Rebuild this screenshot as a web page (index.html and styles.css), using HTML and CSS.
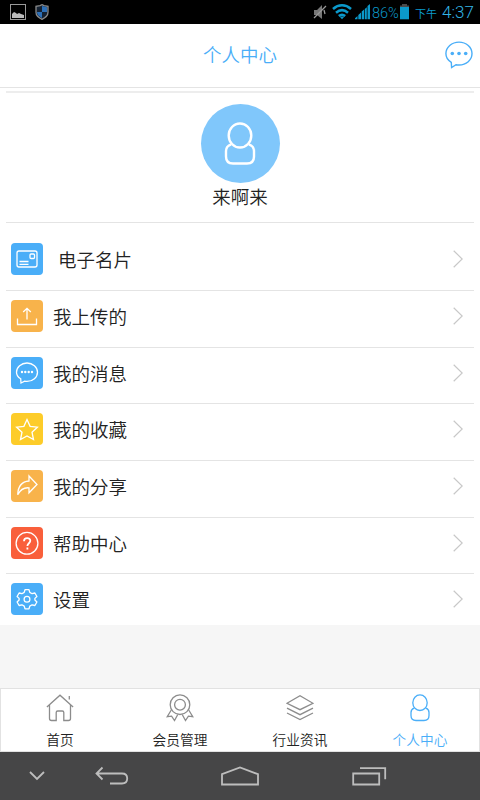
FILE: index.html
```html
<!DOCTYPE html>
<html lang="zh-CN">
<head>
  <meta charset="UTF-8" />
  <meta name="viewport" content="width=device-width, initial-scale=1" />
  <title>个人中心</title>
  <link rel="stylesheet" href="styles.css">
</head>
<body>

  <!-- Status bar -->
  <div class="status">
    <svg class="s-photo" width="16" height="16" viewBox="0 0 16 16"><rect x=".5" y=".5" width="15" height="15" fill="none" stroke="#999"/><path d="M2 14v-4l2-2 2 1 1 1 2-1 2 1 3 1v3z" fill="#bbb"/></svg>
    <svg class="s-shield" width="14" height="16" viewBox="0 0 14 16"><path d="M7 .7l2 1 4 .6v6c0 3-2.500 5.500-6 7-3.500-1.500-6-4-6-7v-6l4-.6z" fill="#152232" stroke="#8a8a8a" stroke-width="1.300"/><path d="M7 2l5 1.200V8H7zM2 8h5v6C4 12.500 2 11 2 8z" fill="#2d70b8"/></svg>
    <span class="spacer"></span>
    <svg class="s-mute" width="14" height="16" viewBox="0 0 14 16"><path d="M1 6h3l5-5v14l-5-4H1z" fill="#777"/><path d="M13 2L1 14M11 6l1 4" stroke="#999" stroke-width="1.300" fill="none"/></svg>
    <svg class="s-wifi" width="20" height="16" viewBox="0 0 20 16" fill="none" stroke="#0b99cb" stroke-width="2.500"><path d="M1 5c5.500-5 12.500-5 18 0M4 8.700c3.700-3.200 8.300-3.200 12 0M6.800 12c2-1.600 4.400-1.600 6.400 0"/><path d="M7.500 12.500L10 15.300l2.500-2.800z" fill="#0b99cb" stroke="none"/></svg>
    <svg class="s-signal" width="15" height="16" viewBox="0 0 15 16"><path d="M0 15.300v-1L2.500 12v3.300zM3.300 15.300V11L6 8.600v6.700zM6.700 15.300V7.600l2.400-2v9.700zM9.800 15.300V5l2-1.800v12.100zM12.500 15.300V2L15 0v15.300z" fill="#0b99cb"/></svg>
    <span class="s-percent">86%</span>
    <svg class="s-battery" width="9" height="16" viewBox="0 0 9 16"><path d="M0 3V1.500h2V0h5v1.500h2V3z" fill="#4a4a4a"/><rect y="3" width="9" height="12.300" fill="#0b99cb"/></svg>
    <span class="s-ampm">下午</span>
    <span class="s-time">4:37</span>
  </div>

  <!-- Title bar -->
  <div class="header">
    <h1>个人中心</h1>
    <svg class="chat" width="28" height="28" viewBox="0 0 28 28" fill="none" stroke="#4aaef8" stroke-width="1.400"><path d="M6.300 21.400C3 19.500.9 16.300.9 12.600.9 6.200 6.700 1.100 14 1.100s13 5.100 13 11.500S21.300 24 14 24c-1 0-2-.1-3-.3L6.600 26.600z"/><g fill="#4aaef8" stroke="none"><circle cx="7.300" cy="12.500" r="1.800"/><circle cx="14" cy="12.500" r="1.800"/><circle cx="20.700" cy="12.500" r="1.800"/></g></svg>
  </div>

  <div class="content">
    <div class="profile">
      <div class="avatar">
        <svg width="32" height="44" viewBox="0 0 32 44" fill="none" stroke="#fff" stroke-width="2.400"><ellipse cx="16" cy="13.500" rx="11.300" ry="12"/><path d="M7.200 22.300C3.500 23.500 2 26 2 29v5.500c0 4.500 2.500 7 7 7h14c4.500 0 7-2.500 7-7V29c0-3-1.500-5.500-5.200-6.700"/></svg>
      </div>
      <div class="name">来啊来</div>
    </div>

    <div class="menu">
      <div class="item first">
        <span class="icon blue"><svg viewBox="0 0 32 32"><rect x="6" y="8" width="20" height="16" rx="2"/><rect x="19" y="11" width="4.500" height="4.500" rx="1"/><path d="M8.500 18.500h9M8.500 21.300h9"/></svg></span>
        <span class="label">电子名片</span>
        <svg class="arrow" viewBox="0 0 10 18"><path d="M.7.700L9.200 9 .7 17.300"/></svg>
      </div>
      <div class="item">
        <span class="icon orange"><svg viewBox="0 0 32 32"><path d="M6.500 18.500v6h19v-6M16 19.500V8.500M12.200 12L16 8.300l3.800 3.700"/></svg></span>
        <span class="label">我上传的</span>
        <svg class="arrow" viewBox="0 0 10 18"><path d="M.7.700L9.200 9 .7 17.300"/></svg>
      </div>
      <div class="item">
        <span class="icon blue"><svg viewBox="0 0 32 32"><path d="M9.700 21.700C7 20.200 5.500 17.900 5.500 15.200c0-5.100 4.700-9.200 10.500-9.200s10.500 4.100 10.500 9.200-4.700 9.200-10.500 9.200c-.8 0-1.600-.1-2.400-.2L10 26z"/><g class="solid"><circle cx="11" cy="15" r="1.200"/><circle cx="14.300" cy="15" r="1.200"/><circle cx="17.700" cy="15" r="1.200"/><circle cx="21" cy="15" r="1.200"/></g></svg></span>
        <span class="label">我的消息</span>
        <svg class="arrow" viewBox="0 0 10 18"><path d="M.7.700L9.200 9 .7 17.300"/></svg>
      </div>
      <div class="item">
        <span class="icon yellow"><svg viewBox="0 0 32 32"><path d="M16 6.500l3.100 6.800 7.300.9-5.400 5 1.500 7.300-6.500-3.600-6.500 3.600 1.500-7.300-5.400-5 7.300-.9z"/></svg></span>
        <span class="label">我的收藏</span>
        <svg class="arrow" viewBox="0 0 10 18"><path d="M.7.700L9.200 9 .7 17.300"/></svg>
      </div>
      <div class="item">
        <span class="icon orange"><svg viewBox="0 0 32 32"><path d="M18 6l8 8.500-8 8.300v-5c-5-.5-8.500 1.500-11.300 7C7 16.500 10.500 11.500 18 11z"/></svg></span>
        <span class="label">我的分享</span>
        <svg class="arrow" viewBox="0 0 10 18"><path d="M.7.700L9.200 9 .7 17.300"/></svg>
      </div>
      <div class="item">
        <span class="icon red"><svg viewBox="0 0 32 32"><circle cx="16" cy="16.300" r="10.900"/><path stroke-width="1.800" d="M13 14.200c0-4.200 6.300-4.100 6.300-.4 0 2.400-2.900 2.500-2.900 5.200M16.400 20.500v2"/></svg></span>
        <span class="label">帮助中心</span>
        <svg class="arrow" viewBox="0 0 10 18"><path d="M.7.700L9.200 9 .7 17.300"/></svg>
      </div>
      <div class="item last">
        <span class="icon blue"><svg viewBox="0 0 32 32"><path stroke-linejoin="round" d="M14 6.700h4l.8 2.700 2.300 1.300 2.800-.7 2 3.500-2 1.900v1.600l2 2-2 3.500-2.800-.7-2.300 1.300-.8 2.700h-4l-.8-2.700-2.300-1.300-2.800.7-2-3.500 2-2v-1.600l-2-1.900 2-3.500 2.800.7 2.300-1.300z"/><circle cx="16" cy="16.200" r="2.900"/></svg></span>
        <span class="label">设置</span>
        <svg class="arrow" viewBox="0 0 10 18"><path d="M.7.700L9.200 9 .7 17.300"/></svg>
      </div>
    </div>
  </div>

  <!-- Bottom tabs -->
  <div class="tabs">
    <div class="tab">
      <svg viewBox="0 0 28 28"><path d="M.9 13L14 1.200 27.100 13M3.500 11v13.500c0 1.300.7 2 2 2h4.700v-8c0-1 .5-1.500 1.500-1.500h4.600c1 0 1.500.5 1.500 1.500v8h4.700c1.300 0 2-.7 2-2V11M23.300 2v3.500"/></svg>
      <span>首页</span>
    </div>
    <div class="tab">
      <svg viewBox="0 0 28 28"><circle cx="14" cy="10.700" r="9.800"/><circle cx="14" cy="10.700" r="5.400"/><path d="M5.300 16L1.200 22.700l4.400-.5L8.500 26.500l3.300-6M22.700 16l4.100 6.700-4.400-.5-2.900 4.300-3.300-6"/></svg>
      <span>会员管理</span>
    </div>
    <div class="tab">
      <svg viewBox="0 0 28 28"><path d="M1 9.300l13-7.500 13 7.500-13 6.400zM1 14.200l13 6.500 13-6.500M1 19l13 6.600L27 19"/></svg>
      <span>行业资讯</span>
    </div>
    <div class="tab active">
      <svg viewBox="0 0 28 28"><ellipse cx="14" cy="8.700" rx="7.200" ry="7.800"/><path d="M8 14.200c-2 .8-3 2.300-3 4.300v3c0 3.300 1.700 5 5 5h8c3.300 0 5-1.700 5-5v-3c0-2-1-3.500-3-4.300"/></svg>
      <span>个人中心</span>
    </div>
  </div>

  <!-- System keys -->
  <div class="navkeys">
    <svg class="k-hide" width="16" height="10" viewBox="0 0 16 10"><path d="M1 1l7 7 7-7"/></svg>
    <svg class="k-back" width="34" height="20" viewBox="0 0 34 20"><path d="M7.500 1.500L1.500 7.500l6 6M2 7.500h25c3.500 0 5.200 2 5.200 5s-1.700 5-5.200 5H15"/></svg>
    <svg class="k-home" width="38" height="20" viewBox="0 0 38 20"><path d="M1 18.500V8.200L19 1.500l18 6.700v10.300z"/></svg>
    <svg class="k-recent" width="36" height="20" viewBox="0 0 36 20"><path d="M1.200 7.500h26v11h-26zM8 2.200h25.200v11"/></svg>
  </div>

</body>
</html>
```
FILE: styles.css
```css
* {
  box-sizing: border-box;
}

body {
  margin: 0;
  height: 800px;
  display: flex;
  flex-direction: column;
  overflow: hidden;
  background: #f6f6f6;
  color: #222;
  font-family: "Noto Sans CJK SC", sans-serif;
  font-weight: 350;
}

svg {
  display: block;
  flex: none;
}

/* status bar */
.status {
  height: 24px;
  flex: none;
  display: flex;
  align-items: center;
  padding: 0 6px 0 10px;
  background: #000;
  color: #0b99cb;
  font-family: Roboto, "Noto Sans CJK SC", sans-serif;
  font-weight: 300;
  white-space: nowrap;
}

.s-shield {
  margin-left: 9px;
}

.spacer {
  flex: 1;
}

.s-wifi {
  margin-left: 5px;
}

.s-signal {
  margin-left: 3px;
}

.s-percent {
  width: 28px;
  margin-left: 2px;
  font-size: 14.5px;
  line-height: 24px;
  padding-top: 3px;
}

.s-ampm {
  width: 22px;
  margin-left: 6px;
  font-size: 11px;
  font-weight: 400;
  padding-top: 2px;
}

.s-time {
  width: 32px;
  margin-left: 5px;
  font-size: 17px;
  color: #33b5e5;
}

/* title bar */
.header {
  height: 64px;
  flex: none;
  display: flex;
  align-items: center;
  justify-content: center;
  position: relative;
  padding-bottom: 3px;
  background: #fff;
  border-bottom: 1px solid #e4e4e4;
}

.header h1 {
  margin: 0;
  font-size: 18.5px;
  font-weight: 350;
  color: #4aaef8;
}

.chat {
  position: absolute;
  right: 7px;
  top: 17px;
}

/* content */
.content {
  height: 537px;
  flex: none;
  padding: 3px 6px 0;
  background: #fff;
}

.profile {
  height: 132px;
  display: flex;
  flex-direction: column;
  align-items: center;
  padding-top: 11px;
  border-top: 2px solid #ededed;
  border-bottom: 1px solid #e4e4e4;
}

.avatar {
  width: 79px;
  height: 79px;
  display: flex;
  align-items: center;
  justify-content: center;
  border-radius: 50%;
  background: #80c7fb;
}

.name {
  font-size: 18.5px;
  line-height: 26px;
}

.item {
  height: 56.7px;
  display: flex;
  align-items: center;
  padding: 0 11px 6px 5px;
  border-bottom: 1.5px solid #e4e4e4;
}

.item.first {
  height: 68px;
  padding-top: 10px;
}

.item.last {
  height: 51px;
  padding-bottom: 1px;
  border-bottom: none;
}

.icon {
  width: 32px;
  height: 32px;
  border-radius: 4px;
}

.icon svg {
  width: 32px;
  height: 32px;
  fill: none;
  stroke: #fff;
  stroke-width: 1.3;
}

.icon .solid {
  fill: #fff;
  stroke: none;
}

.blue {
  background: #4aaef8;
}

.orange {
  background: #f8b34b;
}

.yellow {
  background: #fdcc29;
}

.red {
  background: #f95f3b;
}

.label {
  flex: 1;
  margin-left: 10px;
  font-size: 18.5px;
  line-height: 28px;
}

.first .label {
  margin-left: 15px;
}

.arrow {
  width: 10px;
  height: 18px;
  fill: none;
  stroke: #c8c8c8;
  stroke-width: 1.2;
}

/* bottom tabs */
.tabs {
  height: 64px;
  flex: none;
  margin-top: auto;
  display: flex;
  background: #fff;
  border: 1px solid #e2e2e2;
  border-width: 1px 0;
  box-shadow: inset 1px 0 #e2e2e2, inset -1px 0 #e2e2e2;
}

.tab {
  flex: 1;
  display: flex;
  flex-direction: column;
  align-items: center;
  padding-top: 5px;
  font-size: 13.7px;
}

.tab svg {
  width: 28px;
  height: 28px;
  fill: none;
  stroke: #8c8c8c;
  stroke-width: 1.3;
}

.tab span {
  margin-top: 7px;
  line-height: 20px;
}

.tab.active {
  color: #4aaef8;
}

.tab.active svg {
  stroke: #4aaef8;
}

/* system keys */
.navkeys {
  height: 48px;
  flex: none;
  display: flex;
  align-items: center;
  padding-left: 29px;
  background: #464647;
}

.navkeys svg {
  fill: none;
  stroke: #bdbdbd;
  stroke-width: 1.8;
}

.k-back {
  margin-left: 50px;
}

.k-home {
  margin-left: 92px;
}

.k-recent {
  margin-left: 93px;
}
```
